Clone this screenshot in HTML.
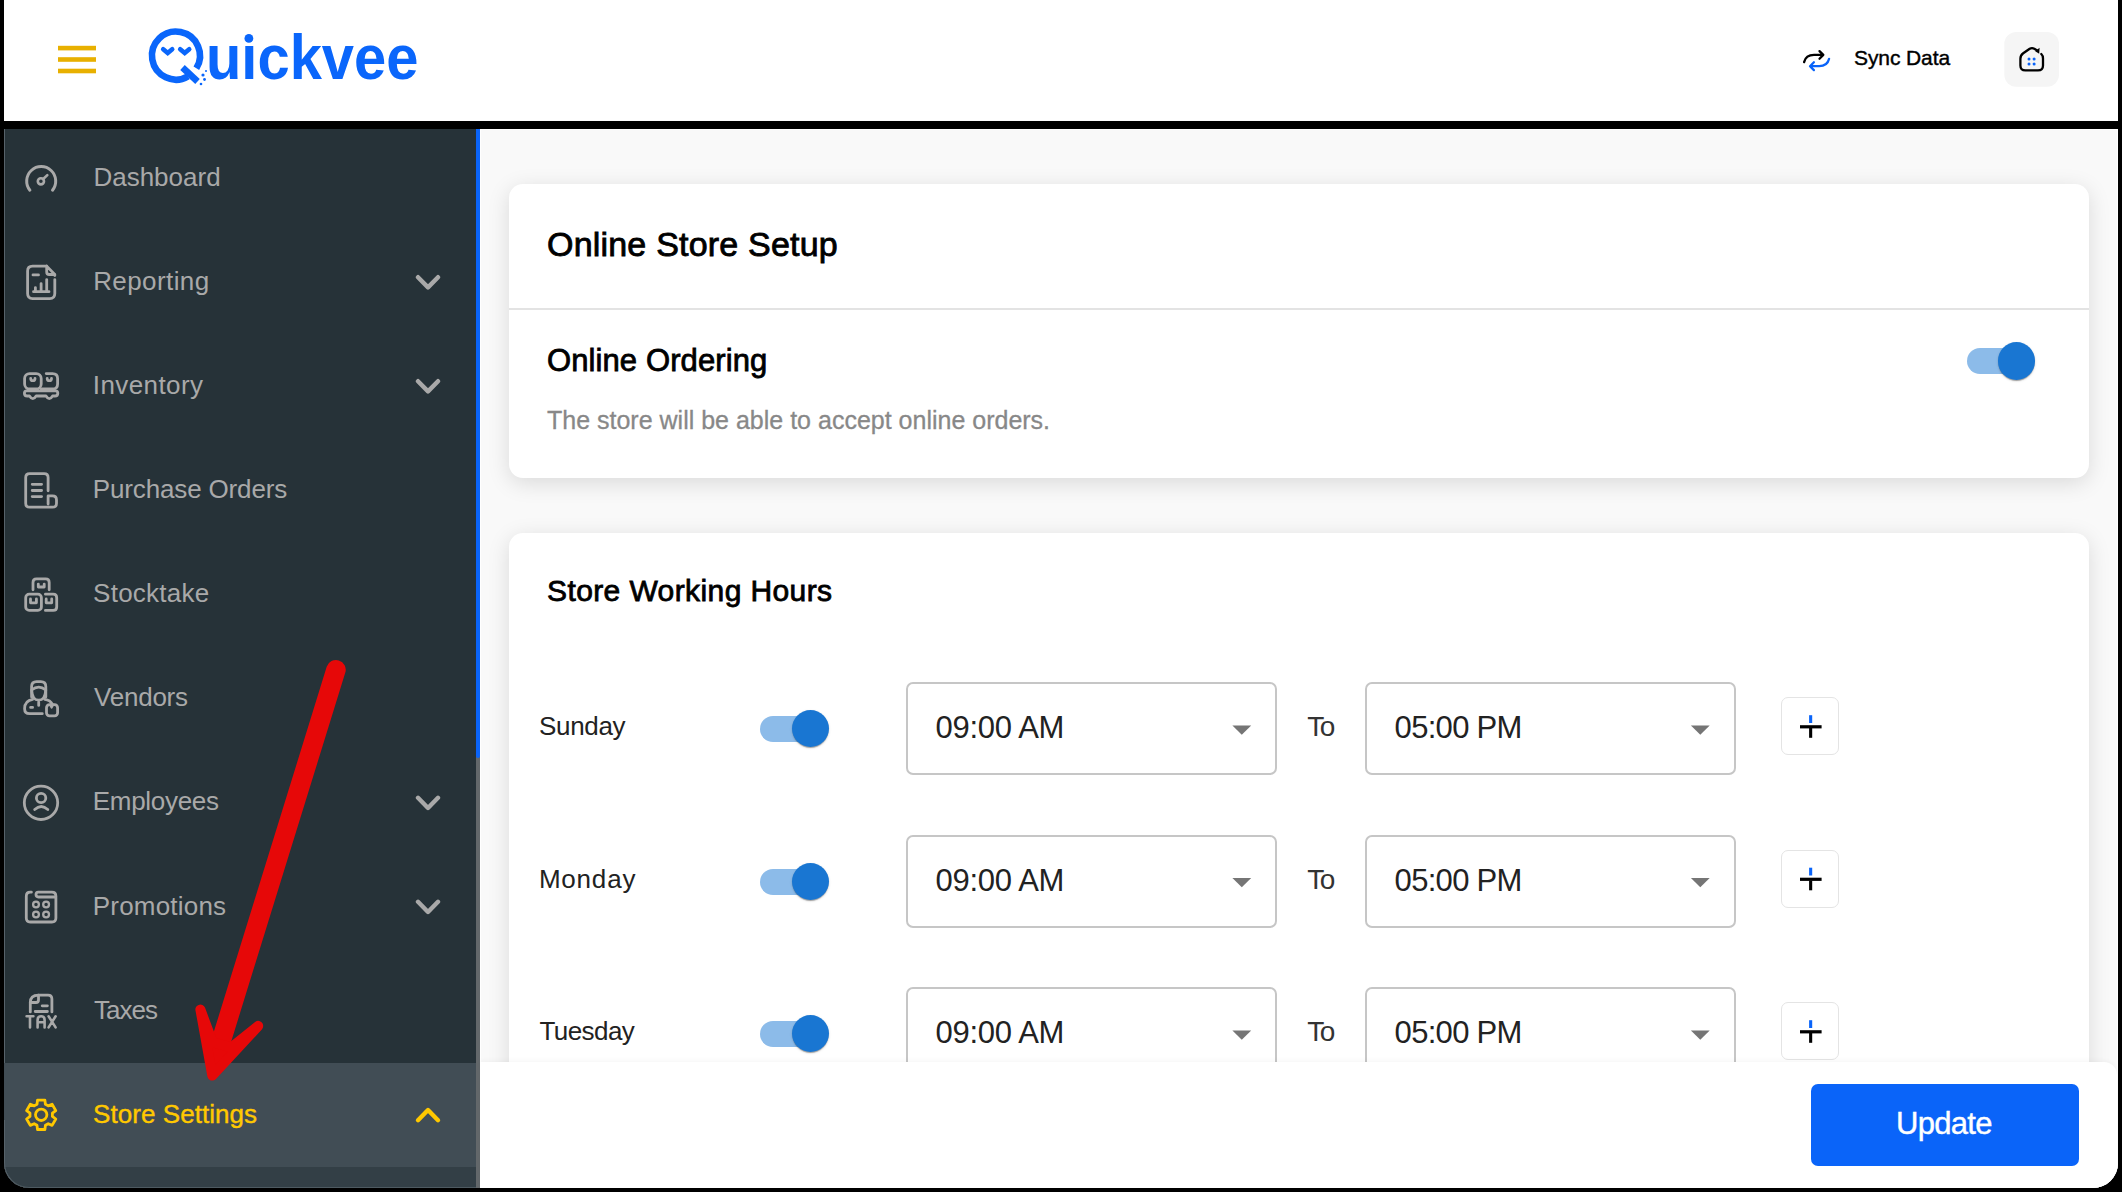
<!DOCTYPE html>
<html><head><meta charset="utf-8"><style>
html,body{margin:0;padding:0;width:2122px;height:1192px;overflow:hidden;background:#000;font-family:"Liberation Sans",sans-serif;}
#frame{position:absolute;left:4px;top:0;width:2114px;height:1188px;overflow:hidden;border-radius:0 0 25px 25px;background:#fff;}
#pg{position:absolute;left:-4px;top:0;width:2122px;height:1192px;}
.a{position:absolute;}
.t{position:absolute;white-space:nowrap;line-height:1;}
.side{color:#a9a9a9;font-size:26px;}
.day{font-size:26px;color:#222;}
.track{width:63px;height:26px;border-radius:13px;background:#8cbbe9;}
.thumb{width:37.2px;height:37.2px;border-radius:50%;background:#1976d2;box-shadow:0 2px 1px -1px rgba(0,0,0,.2),0 1px 1px 0 rgba(0,0,0,.14),0 1px 3px 0 rgba(0,0,0,.12);}
.sel{width:367px;height:89px;border:2px solid #c6c6c6;border-radius:7px;background:#fff;}
.tm{font-size:31px;color:#222;letter-spacing:-0.45px;}
.to{font-size:28px;color:#333;}
.plusb{width:56px;height:56px;border:1.5px solid #e4e4e4;border-radius:7px;background:#fff;}
svg{position:absolute;left:0;top:0;overflow:visible;}
</style></head><body>
<div id="frame"><div id="pg">
  <div class="a" style="left:0;top:0;width:2122px;height:121px;background:#fff"></div>
  <div class="a" style="left:0;top:121px;width:2122px;height:8px;background:#000"></div>

  <div class="a" style="left:4px;top:129px;width:472px;height:1063px;background:#263238"></div>
  <div class="a" style="left:4px;top:129px;width:1px;height:1000px;background:#56626a"></div>
  <div class="a" style="left:4px;top:1063px;width:472px;height:104px;background:#414d55"></div>
  <div class="a" style="left:4px;top:1167px;width:472px;height:30px;background:#333f46"></div>
  <div class="a" style="left:4px;top:1120px;width:475px;height:67px;border-left:1px solid #56626a;border-bottom:1px solid #4e5a61;border-bottom-left-radius:25px"></div>
  <div class="a" style="left:476px;top:129px;width:4px;height:1063px;background:#63686b"></div>
  <div class="a" style="left:476px;top:129px;width:4px;height:629px;background:#0a64f9;border-radius:0 0 2px 2px"></div>

  <div class="a" style="left:480px;top:129px;width:1642px;height:1063px;background:#f9f9f9"></div>
  <div class="a" style="left:480px;top:129px;width:1px;height:1063px;background:#fff"></div>
  <div class="a" style="left:480px;top:129px;width:1642px;height:1px;background:#fff"></div>
  <div class="a" style="left:2117px;top:129px;width:1px;height:1063px;background:#fff"></div>

  <div class="a" style="left:509px;top:184px;width:1580px;height:294px;background:#fff;border-radius:14px;box-shadow:0 5px 22px rgba(0,0,0,0.13)"></div>
  <div class="a" style="left:509px;top:308px;width:1580px;height:2px;background:#e3e3e3"></div>

  <div class="a" style="left:509px;top:533px;width:1580px;height:700px;background:#fff;border-radius:14px;box-shadow:0 5px 22px rgba(0,0,0,0.13)"></div>

  <div class="a track" style="left:1967px;top:347.5px"></div>
  <div class="a thumb" style="left:1997.9px;top:342.4px"></div>

  <div class="t day" style="left:539.1px;top:713.0px;letter-spacing:-0.35px">Sunday</div>
  <div class="a track" style="left:760px;top:716.0px"></div>
  <div class="a thumb" style="left:791.8px;top:710.2px"></div>
  <div class="a sel" style="left:906px;top:682px"></div>
  <div class="t tm" style="left:935.5px;top:712.3px;letter-spacing:-0.3px">09:00 AM</div>
  <div class="t to" style="left:1307.2px;top:713.0px;letter-spacing:-1.5px">To</div>
  <div class="a sel" style="left:1365px;top:682px"></div>
  <div class="t tm" style="left:1394.6px;top:712.3px;letter-spacing:-0.7px">05:00 PM</div>
  <div class="a plusb" style="left:1781px;top:697.0px"></div>
  <div class="t day" style="left:538.9px;top:865.5px;letter-spacing:0.8px">Monday</div>
  <div class="a track" style="left:760px;top:868.5px"></div>
  <div class="a thumb" style="left:791.8px;top:862.7px"></div>
  <div class="a sel" style="left:906px;top:835px"></div>
  <div class="t tm" style="left:935.5px;top:864.8px;letter-spacing:-0.3px">09:00 AM</div>
  <div class="t to" style="left:1307.2px;top:865.5px;letter-spacing:-1.5px">To</div>
  <div class="a sel" style="left:1365px;top:835px"></div>
  <div class="t tm" style="left:1394.6px;top:864.8px;letter-spacing:-0.7px">05:00 PM</div>
  <div class="a plusb" style="left:1781px;top:849.5px"></div>
  <div class="t day" style="left:539.4px;top:1018.0px;letter-spacing:-0.55px">Tuesday</div>
  <div class="a track" style="left:760px;top:1021.0px"></div>
  <div class="a thumb" style="left:791.8px;top:1015.2px"></div>
  <div class="a sel" style="left:906px;top:987px"></div>
  <div class="t tm" style="left:935.5px;top:1017.3px;letter-spacing:-0.3px">09:00 AM</div>
  <div class="t to" style="left:1307.2px;top:1018.0px;letter-spacing:-1.5px">To</div>
  <div class="a sel" style="left:1365px;top:987px"></div>
  <div class="t tm" style="left:1394.6px;top:1017.3px;letter-spacing:-0.7px">05:00 PM</div>
  <div class="a plusb" style="left:1781px;top:1002.0px"></div>
  <svg width="2122" height="1192" viewBox="0 0 2122 1192">
   <g fill="#757575"><path d="M1232.4,725.4 L1251.2,725.4 L1241.8,734.8 Z"/><path d="M1690.9,725.4 L1709.7,725.4 L1700.3,734.8 Z"/><path d="M1232.4,877.9 L1251.2,877.9 L1241.8,887.3 Z"/><path d="M1690.9,877.9 L1709.7,877.9 L1700.3,887.3 Z"/><path d="M1232.4,1030.4 L1251.2,1030.4 L1241.8,1039.8 Z"/><path d="M1690.9,1030.4 L1709.7,1030.4 L1700.3,1039.8 Z"/></g>
   <g><rect x="1800" y="725.2" width="21.6" height="3.2" fill="#000"/><rect x="1809.1" y="728.0" width="3.1" height="9.8" fill="#000"/><rect x="1809.1" y="715.2" width="3.1" height="7.8" fill="#0a64f9"/><rect x="1800" y="877.7" width="21.6" height="3.2" fill="#000"/><rect x="1809.1" y="880.5" width="3.1" height="9.8" fill="#000"/><rect x="1809.1" y="867.7" width="3.1" height="7.8" fill="#0a64f9"/><rect x="1800" y="1030.2" width="21.6" height="3.2" fill="#000"/><rect x="1809.1" y="1033.0" width="3.1" height="9.8" fill="#000"/><rect x="1809.1" y="1020.2" width="3.1" height="7.8" fill="#0a64f9"/></g>
  </svg>

  <div class="a" style="left:480px;top:1062px;width:1637px;height:140px;background:#fff;border-radius:0 13px 0 0;box-shadow:0 -2px 4px rgba(0,0,0,0.03)"></div>
  <div class="a" style="left:1811px;top:1084px;width:268px;height:82px;background:#0a64f9;border-radius:7px"></div>

  <svg width="2122" height="1192" viewBox="0 0 2122 1192">
   <!-- hamburger -->
   <g fill="#e8b000">
    <rect x="58" y="45.8" width="38" height="4.6"/>
    <rect x="58" y="57.2" width="38" height="4.6"/>
    <rect x="58" y="68.7" width="38" height="4.6"/>
   </g>
   <!-- logo Q -->
   <g stroke="#0a66fb" fill="none" stroke-linecap="round">
    <path d="M196.35,68.3 A24,24 0 1 0 188,76.4" stroke-width="6.6" stroke-linecap="butt"/>
    <path d="M182.5,67.5 L197.5,81.5" stroke-width="6.6" stroke-linecap="butt"/>
    <path d="M163.2,49.2 L167.7,53 L172.2,49.2 M180.2,49.2 L184.7,53 L189.2,49.2" stroke-width="4.6"/>
   </g>
   <g fill="#0a66fb"><circle cx="203" cy="75" r="1.6"/><circle cx="204.5" cy="79.5" r="1.4"/><circle cx="201" cy="84" r="1.3"/><circle cx="206" cy="71" r="1"/></g>
   <text x="206" y="79" font-family="Liberation Sans" font-weight="bold" font-size="63" fill="#0a66fb" textLength="212.5" lengthAdjust="spacingAndGlyphs">uickvee</text>
   <rect x="243" y="31" width="13" height="11" fill="#fff"/><circle cx="248.9" cy="38.4" r="4.4" fill="#0a66fb"/>

   <!-- sync icon -->
   <g fill="none" stroke-width="2.3" stroke-linecap="round" stroke-linejoin="round">
    <path stroke="#000" d="M1804.1,62.1 C1805.3,57.3 1808.5,54.9 1814,54.9 L1823,54.9 M1819.5,51.1 L1823.3,54.9 L1819.5,58.7"/>
    <path stroke="#0a64f9" d="M1829.1,58.8 C1827.9,63.8 1824.7,66.2 1819.2,66.2 L1810.2,66.2 M1813.9,62.3 L1810,66.2 L1813.9,70.1"/>
   </g>
   <!-- store button -->
   <rect x="2004.3" y="32" width="54.7" height="54.8" rx="12" fill="#f5f5f5"/>
   <g fill="none" stroke="#000" stroke-width="2.3" stroke-linecap="round" stroke-linejoin="round">
    <path d="M2037.2,50.6 L2034.3,48.8 Q2032,47.4 2029.7,48.8 L2023.2,53.3 Q2020.4,55.3 2020.4,58.8 L2020.4,65.4 Q2020.4,70.4 2025.4,70.4 L2038,70.4 Q2043,70.4 2043,65.4 L2043,58.5 Q2043,55.6 2041.3,54"/>
   </g>
   <path d="M2039.6,47.8 L2039.2,53.8 L2035.2,51.2 Z" fill="#000"/>
   <g fill="#0a64f9"><circle cx="2029" cy="59" r="1.5"/><circle cx="2034.1" cy="59" r="1.5"/><circle cx="2029" cy="64" r="1.5"/><circle cx="2034.1" cy="64" r="1.5"/></g>

   <!-- sidebar icons -->
   <g fill="none" stroke="#a9a9a9" stroke-width="2.8" stroke-linecap="round" stroke-linejoin="round">
    <!-- dashboard -->
    <path d="M29.9,190.2 A14.5,14.5 0 1 1 52.5,190.2" stroke-width="3"/>
    <circle cx="40.9" cy="181.3" r="3.1" stroke-width="2.6"/>
    <path d="M43.2,179 L47.3,175.1" stroke-width="2.6"/>
    <!-- reporting -->
    <path d="M46.7,266.1 L32.6,266.1 Q27.6,266.1 27.6,271.1 L27.6,293.6 Q27.6,298.6 32.6,298.6 L49.8,298.6 Q54.8,298.6 54.8,293.6 L54.8,279.6"/>
    <path d="M54.8,275.6 L54.8,274.5 L46.7,266.1 L46.7,272 Q46.7,274.5 49.2,274.5 L54.8,274.5"/>
    <path d="M33,274.9 L38.5,274.9 M33.5,291.7 L49,291.7 M35.4,291.7 L35.4,287.6 M41.1,291.7 L41.1,283.6 M46.7,291.7 L46.7,279.6"/>
    <!-- inventory -->
    <rect x="24.6" y="373.6" width="16.6" height="15.3" rx="5"/>
    <path d="M46.2,373.6 L52.6,373.6 Q57.6,373.6 57.6,378.6 L57.6,383.9 Q57.6,388.9 52.6,388.9 L41.2,388.9"/>
    <path d="M30.7,378.4 A2.15,2.3 0 0 0 35,378.4 M47.2,378.4 A2.15,2.3 0 0 0 51.5,378.4"/>
    <path d="M26.6,390.8 L55.6,390.8 Q57.8,390.8 57.8,393.2 Q57.8,396 55,396 L52.6,396 Q49.3,401.3 46,396 L36.1,396 Q32.8,401.3 29.5,396 L27.2,396 Q24.4,396 24.4,393.2 Q24.4,390.8 26.6,390.8 Z"/>
    <!-- purchase orders -->
    <path d="M48.1,490.8 L48.1,477.6 Q48.1,473.6 44.1,473.6 L29.7,473.6 Q25.7,473.6 25.7,477.6 L25.7,503.2 Q25.7,507.2 29.7,507.2 L52.5,507.2 Q56.5,507.2 56.5,503.2 L56.5,499.9 Q56.5,495.9 52.5,495.9 L48.1,495.9 L48.1,504"/>
    <path d="M32.2,484.3 L41.6,484.3 M32.2,490.5 L41.6,490.5 M32.2,496.6 L41.6,496.6"/>
    <!-- stocktake -->
    <path d="M33,589.8 L33,582.4 Q33,578.9 36.5,578.9 L45.7,578.9 Q49.2,578.9 49.2,582.4 L49.2,589.8"/>
    <path d="M38.3,584.1 L38.3,587 L44.2,587 L44.2,584.1 M30.5,599 L30.5,602.8 L36.4,602.8 L36.4,599 M46.2,599 L46.2,602.8 L51.7,602.8 L51.7,599"/>
    <rect x="25.7" y="594.2" width="15.7" height="16.2" rx="3.5"/>
    <path d="M45.4,594.2 L53.2,594.2 Q56.7,594.2 56.7,597.7 L56.7,606.9 Q56.7,610.4 53.2,610.4 L45.4,610.4"/>
    <!-- vendors -->
    <path d="M31.6,697 L31.6,686.6 Q31.6,681.6 36.6,681.6 L40.8,681.6 Q45.8,681.6 45.8,686.6 L45.8,697"/>
    <path d="M31.6,690 Q38.7,684.2 45.8,690 M31.8,691 Q32.4,700.2 38.7,700.2 Q45,700.2 45.6,691"/>
    <path d="M42.3,713.7 L29.6,713.7 Q24.6,713.7 24.6,708.7 Q24.8,700.6 32.6,699.4 M44.8,699.4 Q50.2,700.2 52.3,704.2"/>
    <path d="M30.6,707.4 L32.6,707.4 M38.7,702.2 L38.7,705.4"/>
    <rect x="46.5" y="704.7" width="11.1" height="11.1" rx="3"/>
    <path d="M50.2,705 L51.6,707.6 L53,705" stroke-width="2.2"/>
    <!-- employees -->
    <circle cx="41" cy="802.8" r="16.7"/>
    <circle cx="41.1" cy="798" r="4.7"/>
    <path d="M34.7,809.6 Q41.2,803.4 47.8,809.6"/>
    <!-- promotions -->
    <path d="M31.4,892.2 L30.3,892.2 Q26.3,892.2 26.3,896.2 L26.3,918 Q26.3,922 30.3,922 L51.9,922 Q55.9,922 55.9,918 L55.9,896.2 Q55.9,892.2 51.9,892.2 L38.2,892.2 Q36,892.2 36,894.6 Q36,897 38.4,897 L55.9,897"/>
    <g stroke-width="2.3"><circle cx="36" cy="904.5" r="2.9"/><circle cx="46.1" cy="904.5" r="2.9"/><circle cx="36" cy="914.5" r="2.9"/><circle cx="46.1" cy="914.5" r="2.9"/></g>
    <!-- taxes -->
    <path d="M30.3,1011.9 L30.3,1002.5 Q30.3,995.1 38.5,995.1 L48,995.1 Q51.9,995.1 51.9,999 L51.9,1011.9"/>
    <path d="M38.5,995.1 L38.5,1000 Q38.5,1002.5 36,1002.5 L30.3,1002.5 M42.2,1005.8 L47.4,1005.8 M35.2,1011.5 L47.4,1011.5"/>
    <path d="M26.6,1016.3 L33.4,1016.3 M30,1016.3 L30,1027.4 M37.6,1027.4 L37.6,1020 Q37.6,1016.3 41.1,1016.3 Q44.6,1016.3 44.6,1020 L44.6,1027.4 M37.6,1022.2 L44.6,1022.2 M48.6,1016.3 L55.6,1027.4 M55.6,1016.3 L48.6,1027.4" stroke-width="2.6"/>
    <!-- chevrons -->
    <path d="M418,277.2 L428,287.4 L438,277.2 M418,381.2 L428,391.4 L438,381.2 M418,797.8 L428,808 L438,797.8 M418,901.8 L428,912 L438,901.8" stroke-width="4.4"/>
   </g>
   <g fill="none" stroke="#ffc800" stroke-width="2.8" stroke-linecap="round" stroke-linejoin="round">
    <path d="M37.0,1104.3 L37.5,1100.1 L44.9,1100.1 L45.4,1104.3 L48.2,1105.9 L52.1,1104.2 L55.8,1110.6 L52.4,1113.2 L52.4,1116.4 L55.8,1119.0 L52.1,1125.4 L48.2,1123.7 L45.4,1125.3 L44.9,1129.5 L37.5,1129.5 L37.0,1125.3 L34.2,1123.7 L30.3,1125.4 L26.6,1119.0 L30.0,1116.4 L30.0,1113.2 L26.6,1110.6 L30.3,1104.2 L34.2,1105.9 Z"/>
    <circle cx="41.2" cy="1114.8" r="5.7"/>
    <path d="M418,1120.2 L428,1110 L438,1120.2" stroke-width="4.4"/>
   </g>
  </svg>

  <div class="t side" style="left:93.4px;top:163.5px;letter-spacing:0.0px">Dashboard</div>
  <div class="t side" style="left:93.2px;top:267.6px;letter-spacing:0.4px">Reporting</div>
  <div class="t side" style="left:92.8px;top:371.8px;letter-spacing:0.4px">Inventory</div>
  <div class="t side" style="left:92.8px;top:476.0px;letter-spacing:-0.15px">Purchase Orders</div>
  <div class="t side" style="left:93.1px;top:580.1px;letter-spacing:0.25px">Stocktake</div>
  <div class="t side" style="left:94.1px;top:684.2px;letter-spacing:-0.25px">Vendors</div>
  <div class="t side" style="left:92.8px;top:788.4px;letter-spacing:-0.3px">Employees</div>
  <div class="t side" style="left:92.8px;top:892.6px;letter-spacing:0.2px">Promotions</div>
  <div class="t side" style="left:94.1px;top:996.7px;letter-spacing:-1.0px">Taxes</div>
  <div class="t side" style="left:93.1px;top:1100.8px;letter-spacing:0.05px;color:#ffc800;-webkit-text-stroke:0.4px #ffc800">Store Settings</div>

  <div class="t" style="left:1854px;top:47.3px;font-size:21px;color:#000;letter-spacing:-0.1px;-webkit-text-stroke:0.4px #000">Sync Data</div>

  <div class="t" style="left:547px;top:227px;font-size:34px;color:#000;letter-spacing:0.2px;-webkit-text-stroke:0.85px #000">Online Store Setup</div>
  <div class="t" style="left:547px;top:344.8px;font-size:31px;color:#000;letter-spacing:0.1px;-webkit-text-stroke:0.8px #000">Online Ordering</div>
  <div class="t" style="left:547px;top:408px;font-size:25px;color:#888;-webkit-text-stroke:0.3px #888">The store will be able to accept online orders.</div>
  <div class="t" style="left:547px;top:576.3px;font-size:30px;color:#000;letter-spacing:0.4px;-webkit-text-stroke:0.8px #000">Store Working Hours</div>

  <div class="t" style="left:1896px;top:1108px;font-size:31px;color:#fff;letter-spacing:-0.7px;-webkit-text-stroke:0.4px #fff">Update</div>

  <svg width="2122" height="1192" viewBox="0 0 2122 1192">
   <g stroke="#e60808" stroke-linecap="round" stroke-linejoin="round">
    <path d="M336,669.7 L219,1048" stroke-width="19.5" fill="none"/>
    <path d="M200.4,1009.6 L212.3,1075.6 L258.2,1026 L231,1047.6 L212.5,1042 Z" stroke-width="10" fill="#e60808"/>
   </g>
  </svg>
</div></div>
</body></html>
